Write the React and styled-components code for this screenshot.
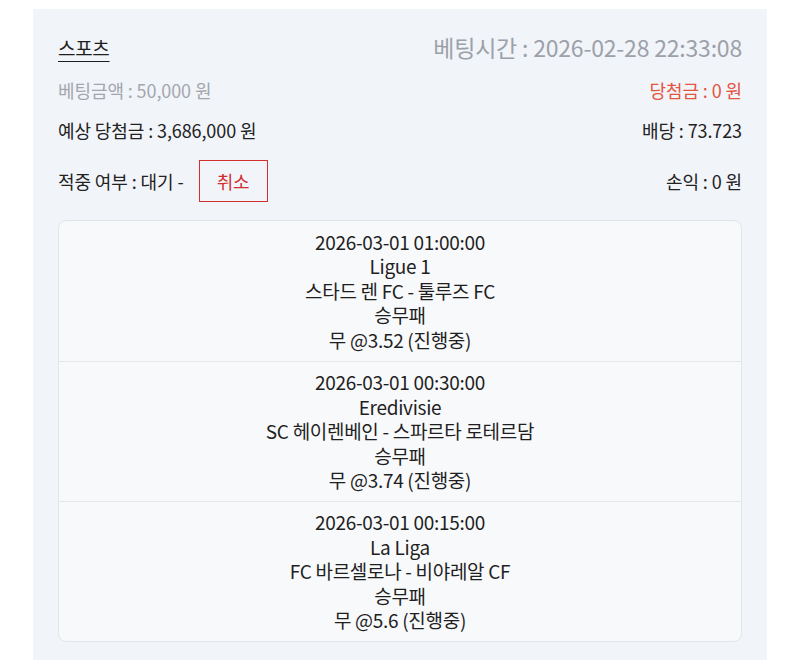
import React from "react";
import styled, { createGlobalStyle } from "styled-components";

const GlobalStyle = createGlobalStyle`
  html, body {
    margin: 0;
    padding: 0;
    background: #ffffff;
  }
  body {
    font-family: "Noto Sans CJK KR", "Noto Sans", sans-serif;
  }
`;

const games = [
  {
    time: "2026-03-01 01:00:00",
    league: "Ligue 1",
    match: "스타드 렌 FC - 툴루즈 FC",
    market: "승무패",
    pick: "무 @3.52 (진행중)",
  },
  {
    time: "2026-03-01 00:30:00",
    league: "Eredivisie",
    match: "SC 헤이렌베인 - 스파르타 로테르담",
    market: "승무패",
    pick: "무 @3.74 (진행중)",
  },
  {
    time: "2026-03-01 00:15:00",
    league: "La Liga",
    match: "FC 바르셀로나 - 비야레알 CF",
    market: "승무패",
    pick: "무 @5.6 (진행중)",
  },
];

const App = () => {
  return (
    <>
      <GlobalStyle />
      <Page>
        <Panel>
          <Header>
            <Category>스포츠</Category>
            <BetTime>베팅시간 : 2026-02-28 22:33:08</BetTime>
          </Header>
          <InfoRow first>
            <Info tone="muted">베팅금액 : 50,000 원</Info>
            <Info tone="red">당첨금 : 0 원</Info>
          </InfoRow>
          <InfoRow>
            <Info>예상 당첨금 : 3,686,000 원</Info>
            <Info>배당 : 73.723</Info>
          </InfoRow>
          <StatusRow>
            <StatusLeft>
              <Info>적중 여부 : 대기 -</Info>
              <CancelButton>취소</CancelButton>
            </StatusLeft>
            <Info>손익 : 0 원</Info>
          </StatusRow>
          <GameList>
            {games.map((g) => (
              <GameItem key={g.time}>
                <span>{g.time}</span>
                <span>{g.league}</span>
                <span>{g.match}</span>
                <span>{g.market}</span>
                <span>{g.pick}</span>
              </GameItem>
            ))}
          </GameList>
        </Panel>
      </Page>
    </>
  );
};

const Page = styled.div`
  width: 800px;
  height: 660px;
  overflow: hidden;
  display: flex;
  justify-content: center;
  padding-top: 9px;
  box-sizing: border-box;
`;

const Panel = styled.div`
  width: 734px;
  min-height: 660px;
  background-color: #f1f4f9;
  padding: 22px 25px 20px;
  box-sizing: border-box;
  display: flex;
  flex-direction: column;
`;

const Header = styled.div`
  display: flex;
  justify-content: space-between;
  align-items: center;
  height: 32px;
`;

const Category = styled.span`
  font-size: 19px;
  color: #1e1e1e;
  text-decoration: underline;
  text-underline-offset: 5px;
  letter-spacing: -0.3px;
`;

const BetTime = styled.span`
  font-size: 23px;
  color: #9ca1a9;
  letter-spacing: -0.2px;
`;

const InfoRow = styled.div`
  display: flex;
  justify-content: space-between;
  align-items: center;
  height: 40px;
  margin-top: ${(props) => (props.first ? "7px" : "0")};
`;

const StatusRow = styled.div`
  display: flex;
  justify-content: space-between;
  align-items: center;
  height: 42px;
  margin-top: 10px;
  margin-bottom: 18px;
`;

const StatusLeft = styled.div`
  display: flex;
  align-items: center;
  gap: 15px;
`;

const Info = styled.span`
  font-size: 18px;
  letter-spacing: -0.1px;
  color: ${(props) =>
    props.tone === "muted"
      ? "#a3a7ad"
      : props.tone === "red"
      ? "#e4553e"
      : "#222222"};
`;

const CancelButton = styled.button`
  width: 69px;
  height: 42px;
  border: 1.5px solid #d22f2f;
  background: transparent;
  color: #d22f2f;
  font-family: inherit;
  font-size: 18px;
  letter-spacing: -0.2px;
  padding: 0;
  cursor: pointer;
`;

const GameList = styled.div`
  background-color: #f8f9fb;
  border: 1px solid #e1e5ea;
  border-radius: 8px;
  display: flex;
  flex-direction: column;
`;

const GameItem = styled.div`
  height: 140px;
  box-sizing: border-box;
  display: flex;
  flex-direction: column;
  align-items: center;
  justify-content: center;
  font-size: 19px;
  line-height: 24.5px;
  letter-spacing: -0.3px;
  color: #1f1f1f;

  & + & {
    border-top: 1px solid #e3e6eb;
  }
`;

export default App;
